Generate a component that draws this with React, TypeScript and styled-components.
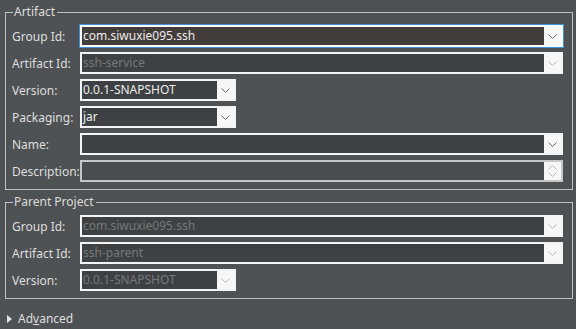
import styled, { createGlobalStyle } from "styled-components";

const Global = createGlobalStyle`
  html, body {
    margin: 0;
    padding: 0;
    background: #4f5254;
  }
  body {
    font-family: "Noto Sans", "Open Sans", sans-serif;
    color: #dcdcdc;
  }
`;

const Page = styled.div`
  width: 576px;
  height: 329px;
  box-sizing: border-box;
  padding: 0 3px 0 5px;
  display: flex;
  flex-direction: column;
  overflow: hidden;
`;

const Group = styled.fieldset<{ $top: number }>`
  margin: ${(p) => p.$top}px 0 0 0;
  padding: 6px 9px 7px 6px;
  border: 1px solid #bfc1c2;
  display: flex;
  flex-direction: column;
  gap: 5px;
  min-width: 0;
`;

const Legend = styled.legend`
  font-size: 12px;
  line-height: 14px;
  padding: 0 2px 0 1px;
  margin-left: 1px;
  color: #dcdcdc;
`;

const Row = styled.div`
  display: flex;
  align-items: center;
  height: 22px;
`;

const Label = styled.span`
  width: 68px;
  flex: none;
  font-size: 12px;
  color: #dedede;
  white-space: nowrap;
`;

const Field = styled.div<{ $short?: boolean; $focus?: boolean; $soft?: boolean }>`
  box-sizing: border-box;
  height: 22px;
  width: ${(p) => (p.$short ? "156px" : "483px")};
  flex: none;
  display: flex;
  border: 2px solid ${(p) => (p.$soft ? "#c4c6c7" : "#f4f4f4")};
  ${(p) => p.$focus && "border-color: #ffffff; box-shadow: 0 0 0 1px #3e8fd6;"}
  background: ${(p) => (p.$focus ? "#423d3a" : p.$soft ? "#4a4d4f" : "#3e4143")};
`;

const Value = styled.span<{ $disabled?: boolean }>`
  flex: 1;
  min-width: 0;
  padding-left: 1px;
  font-size: 12px;
  line-height: 18px;
  color: ${(p) => (p.$disabled ? "#75787a" : "#ececec")};
  white-space: nowrap;
  overflow: hidden;
`;

const Button = styled.span`
  width: 17px;
  flex: none;
  background: #f7f7f7;
  display: flex;
  flex-direction: column;
  align-items: center;
  justify-content: center;
  gap: 2px;
`;

const Advanced = styled.div`
  display: flex;
  align-items: center;
  gap: 6px;
  margin-top: 11px;
  padding-left: 2px;
  font-size: 12px;
  color: #dedede;
  u {
    text-decoration-thickness: 1px;
  }
`;

const Chevron = ({ up, light }: { up?: boolean; light?: boolean }) => (
  <svg width="9" height="5" viewBox="0 0 9 5">
    <polyline
      points={up ? "0.5,4.5 4.5,0.5 8.5,4.5" : "0.5,0.5 4.5,4.5 8.5,0.5"}
      fill="none"
      stroke={light ? "#b8b8b8" : "#6a6a6a"}
      strokeWidth="1"
    />
  </svg>
);

type FieldProps = {
  label: string;
  value?: string;
  short?: boolean;
  focus?: boolean;
  disabled?: boolean;
  spinner?: boolean;
};

const FormRow = ({ label, value = "", short, focus, disabled, spinner }: FieldProps) => (
  <Row>
    <Label>{label}</Label>
    <Field $short={short} $focus={focus} $soft={spinner}>
      <Value $disabled={disabled}>{value}</Value>
      <Button>
        {spinner ? (
          <>
            <Chevron up light />
            <Chevron light />
          </>
        ) : (
          <Chevron light={disabled} />
        )}
      </Button>
    </Field>
  </Row>
);

export default function App() {
  return (
    <>
      <Global />
      <Page>
        <Group $top={5}>
          <Legend>Artifact</Legend>
          <FormRow label="Group Id:" value="com.siwuxie095.ssh" focus />
          <FormRow label="Artifact Id:" value="ssh-service" disabled />
          <FormRow label="Version:" value="0.0.1-SNAPSHOT" short />
          <FormRow label="Packaging:" value="jar" short />
          <FormRow label="Name:" />
          <FormRow label="Description:" spinner />
        </Group>
        <Group $top={5}>
          <Legend>Parent Project</Legend>
          <FormRow label="Group Id:" value="com.siwuxie095.ssh" disabled />
          <FormRow label="Artifact Id:" value="ssh-parent" disabled />
          <FormRow label="Version:" value="0.0.1-SNAPSHOT" short disabled />
        </Group>
        <Advanced>
          <svg width="5" height="8" viewBox="0 0 5 8">
            <polygon points="0,0 5,4 0,8" fill="#e6e6e6" />
          </svg>
          <span>
            Ad<u>v</u>anced
          </span>
        </Advanced>
      </Page>
    </>
  );
}
